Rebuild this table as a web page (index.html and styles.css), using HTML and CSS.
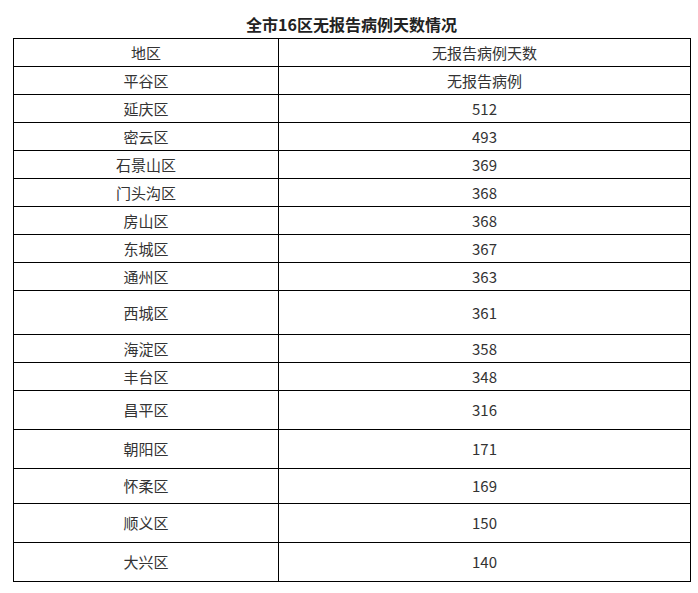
FILE: index.html
```html
<!DOCTYPE html>
<html lang="zh-CN">
<head>
<meta charset="utf-8">
<title>全市16区无报告病例天数情况</title>
<link rel="stylesheet" href="styles.css">
</head>
<body>
<div class="page">
  <h1 class="title">全市16区无报告病例天数情况</h1>
  <table class="data">
    <colgroup><col class="c1"><col class="c2"></colgroup>
    <tbody>
      <tr class="h28"><td>地区</td><td>无报告病例天数</td></tr>
      <tr class="h28"><td>平谷区</td><td>无报告病例</td></tr>
      <tr class="h28"><td>延庆区</td><td>512</td></tr>
      <tr class="h28"><td>密云区</td><td>493</td></tr>
      <tr class="h28"><td>石景山区</td><td>369</td></tr>
      <tr class="h28"><td>门头沟区</td><td>368</td></tr>
      <tr class="h28"><td>房山区</td><td>368</td></tr>
      <tr class="h28"><td>东城区</td><td>367</td></tr>
      <tr class="h28"><td>通州区</td><td>363</td></tr>
      <tr class="h44"><td>西城区</td><td>361</td></tr>
      <tr class="h28"><td>海淀区</td><td>358</td></tr>
      <tr class="h28"><td>丰台区</td><td>348</td></tr>
      <tr class="h39"><td>昌平区</td><td>316</td></tr>
      <tr class="h39"><td>朝阳区</td><td>171</td></tr>
      <tr class="h35"><td>怀柔区</td><td>169</td></tr>
      <tr class="h39"><td>顺义区</td><td>150</td></tr>
      <tr class="h39"><td>大兴区</td><td>140</td></tr>
    </tbody>
  </table>
</div>
</body>
</html>
```
FILE: styles.css
```css
html, body {
  margin: 0;
  padding: 0;
  background: #fff;
}
body {
  font-family: "Noto Sans CJK SC", "Noto Sans", sans-serif;
  color: #333;
}
.page {
  padding: 12px 0 0 13px;
}
.title {
  margin: 0 0 2px 0;
  width: 677px;
  text-align: center;
  font-size: 16px;
  line-height: 24px;
  font-weight: bold;
  color: #222;
}
.data {
  border-collapse: collapse;
  width: 677px;
  table-layout: fixed;
}
.c1 { width: 265px; }
.c2 { width: 412px; }
.data td {
  border: 1px solid #000;
  padding: 0;
  text-align: center;
  vertical-align: middle;
  font-size: 15px;
  line-height: 20px;
}
.h28 td { height: 27px; }
.h35 td { height: 34px; }
.h39 td { height: 38px; }
.h44 td { height: 43px; }
```
